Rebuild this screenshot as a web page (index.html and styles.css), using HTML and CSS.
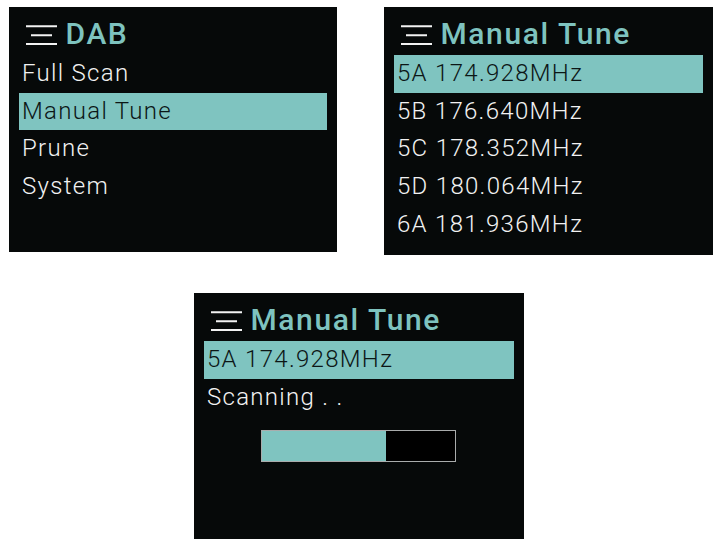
FILE: index.html
```html
<!DOCTYPE html>
<html>
<head>
<meta charset="utf-8">
<link rel="stylesheet" href="styles.css">
</head>
<body>
<div class="top-row">
  <section class="screen screen-a">
    <header class="head">
      <svg class="menu-icon" viewBox="0 0 31 20" width="31" height="20"><path d="M0 1.2H31M5 10.2H26M0 19H31" stroke="#f2f2f2" stroke-width="2" fill="none"/></svg>
      <h1 class="title">DAB</h1>
    </header>
    <ul class="list">
      <li class="item">Full Scan</li>
      <li class="item sel">Manual Tune</li>
      <li class="item">Prune</li>
      <li class="item">System</li>
    </ul>
  </section>
  <section class="screen screen-b">
    <header class="head">
      <svg class="menu-icon" viewBox="0 0 31 20" width="31" height="20"><path d="M0 1.2H31M5 10.2H26M0 19H31" stroke="#f2f2f2" stroke-width="2" fill="none"/></svg>
      <h1 class="title">Manual Tune</h1>
    </header>
    <ul class="list">
      <li class="item sel">5A 174.928MHz</li>
      <li class="item">5B 176.640MHz</li>
      <li class="item">5C 178.352MHz</li>
      <li class="item">5D 180.064MHz</li>
      <li class="item">6A 181.936MHz</li>
    </ul>
  </section>
</div>
<div class="bottom-row">
  <section class="screen screen-c">
    <header class="head">
      <svg class="menu-icon" viewBox="0 0 31 20" width="31" height="20"><path d="M0 1.2H31M5 10.2H26M0 19H31" stroke="#f2f2f2" stroke-width="2" fill="none"/></svg>
      <h1 class="title">Manual Tune</h1>
    </header>
    <ul class="list">
      <li class="item sel">5A 174.928MHz</li>
      <li class="item">Scanning . .</li>
    </ul>
    <div class="progress"><div class="progress-fill" style="width:64.5%"></div></div>
  </section>
</div>
</body>
</html>
```

FILE: styles.css
```css
html, body {
  margin: 0;
  padding: 0;
  background: #ffffff;
}
body {
  width: 723px;
  height: 546px;
  overflow: hidden;
  font-family: Roboto, "Liberation Sans", sans-serif;
}
.top-row {
  display: flex;
  align-items: flex-start;
  gap: 47px;
  padding: 7px 0 0 9px;
}
.bottom-row {
  display: flex;
  padding: 38px 0 0 194px;
}
.screen {
  background: #060909;
  box-sizing: border-box;
}
.screen-a { width: 328px; height: 245px; }
.screen-b { width: 329px; height: 248px; }
.screen-c { width: 330px; height: 246px; }
.head {
  display: flex;
  align-items: flex-start;
  height: 48px;
  box-sizing: border-box;
  padding: 12px 0 0 16.5px;
}
.menu-icon {
  margin-top: 5.8px;
  margin-right: 9px;
  flex: none;
}
.title {
  margin: 0;
  font-size: 30px;
  line-height: 30px;
  font-weight: 500;
  color: #7ec3bf;
  letter-spacing: 1.6px;
}
.list {
  list-style: none;
  margin: 0 10px;
  padding: 0;
}
.item {
  height: 37.7px;
  line-height: 37.7px;
  padding-left: 3px;
  font-size: 24px;
  font-weight: 300;
  letter-spacing: 1.3px;
  color: #f2f2f2;
  white-space: nowrap;
}
.item.sel {
  background: #7fc4c0;
  color: #0c1616;
}
.progress {
  margin: 14px 0 0 67px;
  width: 195px;
  height: 32px;
  box-sizing: border-box;
  border: 1.5px solid #a9acac;
  background: #000;
  display: flex;
}
.progress-fill {
  background: #7fc4c0;
  height: 100%;
}
```
